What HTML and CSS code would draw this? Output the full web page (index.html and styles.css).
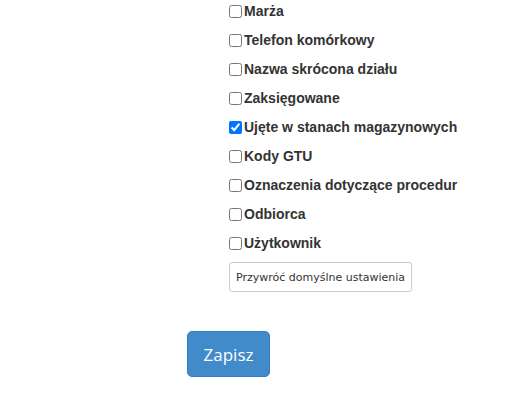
FILE: index.html
```html
<!DOCTYPE html>
<html lang="pl">
<head>
    <meta charset="UTF-8">
    <meta name="viewport" content="width=device-width, initial-scale=1.0">
    <title>Ustawienia kolumn</title>
    <link rel="stylesheet" href="styles.css">
</head>
<body>

<form class="settings">
    <!-- Lista kolumn -->
    <div class="columns">
        <label class="column-option"><input type="checkbox">Marża</label>
        <label class="column-option"><input type="checkbox">Telefon komórkowy</label>
        <label class="column-option"><input type="checkbox">Nazwa skrócona działu</label>
        <label class="column-option"><input type="checkbox">Zaksięgowane</label>
        <label class="column-option"><input type="checkbox" checked>Ujęte w stanach magazynowych</label>
        <label class="column-option"><input type="checkbox">Kody GTU</label>
        <label class="column-option"><input type="checkbox">Oznaczenia dotyczące procedur</label>
        <label class="column-option"><input type="checkbox">Odbiorca</label>
        <label class="column-option"><input type="checkbox">Użytkownik</label>
        <button type="button" class="btn-default">Przywróć domyślne ustawienia</button>
    </div>

    <div class="actions">
        <button type="submit" class="btn-primary">Zapisz</button>
    </div>
</form>

</body>
</html>
```

FILE: styles.css
```css
body {
    margin: 0;
    font-family: 'Liberation Sans', Arial, sans-serif;
    color: #333;
    background-color: #fff;
}
.settings {
    padding-top: 1px;
}
.columns {
    display: flex;
    flex-direction: column;
    align-items: flex-start;
    gap: 9px;
    margin-left: 229px;
}
.column-option {
    display: flex;
    align-items: center;
    height: 20px;
    font-size: 14px;
    font-weight: bold;
    cursor: pointer;
}
.column-option input {
    width: 13px;
    height: 13px;
    margin: 0 2px 0 0;
}
.btn-default {
    height: 30px;
    padding: 0 6px;
    background-color: #fff;
    border: 1px solid #ccc;
    border-radius: 3px;
    color: #333;
    font-family: 'DejaVu Sans', sans-serif;
    font-size: 11px;
    cursor: pointer;
}
.actions {
    margin-top: 39px;
    margin-left: 187px;
}
.btn-primary {
    width: 83px;
    height: 46px;
    background-color: #428bca;
    border: 1px solid #357ebd;
    border-radius: 5px;
    color: #fff;
    font-family: 'Open Sans', sans-serif;
    font-size: 17px;
    cursor: pointer;
}
```
